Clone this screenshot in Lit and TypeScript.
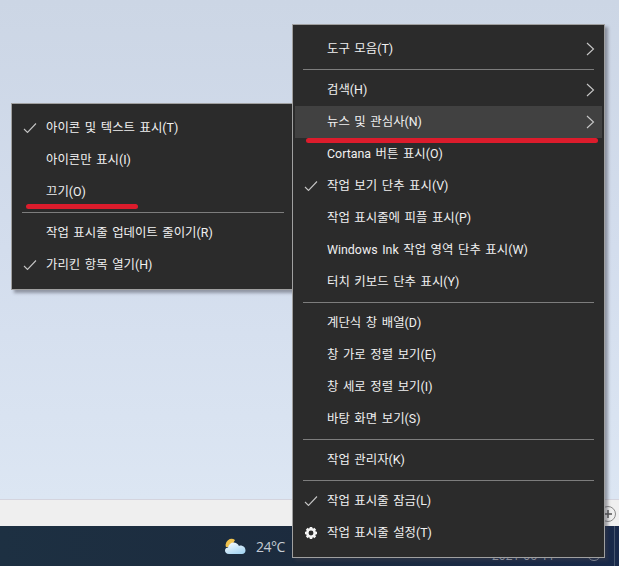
import { LitElement, html, css, svg } from "lit";
import { customElement } from "lit/decorators.js";

type Item = { t: string; check?: boolean; arrow?: boolean; gear?: boolean; hover?: boolean } | null;

const MAIN: Item[] = [
  { t: "도구 모음(T)", arrow: true },
  null,
  { t: "검색(H)", arrow: true },
  { t: "뉴스 및 관심사(N)", arrow: true, hover: true },
  { t: "Cortana 버튼 표시(O)" },
  { t: "작업 보기 단추 표시(V)", check: true },
  { t: "작업 표시줄에 피플 표시(P)" },
  { t: "Windows Ink 작업 영역 단추 표시(W)" },
  { t: "터치 키보드 단추 표시(Y)" },
  null,
  { t: "계단식 창 배열(D)" },
  { t: "창 가로 정렬 보기(E)" },
  { t: "창 세로 정렬 보기(I)" },
  { t: "바탕 화면 보기(S)" },
  null,
  { t: "작업 관리자(K)" },
  null,
  { t: "작업 표시줄 잠금(L)", check: true },
  { t: "작업 표시줄 설정(T)", gear: true },
];

const SUB: Item[] = [
  { t: "아이콘 및 텍스트 표시(T)", check: true },
  { t: "아이콘만 표시(I)" },
  { t: "끄기(O)" },
  null,
  { t: "작업 표시줄 업데이트 줄이기(R)" },
  { t: "가리킨 항목 열기(H)", check: true },
];

const check = svg`<path d="M1 6.500 L4.500 10 L13 1" fill="none" stroke="#c4c4c4" stroke-width="1.1"/>`;
const arrow = svg`<path d="M1 1 L7.500 7 L1 13" fill="none" stroke="#c8c8c8" stroke-width="1.1"/>`;
const gear = svg`
  <circle cx="6" cy="6" r="3.700" fill="none" stroke="#f4f4f4" stroke-width="2.500"/>
  <g stroke="#f4f4f4" stroke-width="2.600">
    ${[0, 45, 90, 135, 180, 225, 270, 315].map(
      (a) => svg`<line x1="6" y1="0" x2="6" y2="2.500" transform="rotate(${a} 6 6)"/>`
    )}
  </g>`;

@customElement("app-root")
export class AppRoot extends LitElement {
  static styles = css`
    :host {
      display: block;
      width: 619px;
      height: 566px;
      font-family: Roboto, "Noto Sans CJK KR", sans-serif;
    }
    .desk {
      position: relative;
      width: 619px;
      height: 566px;
      overflow: hidden;
      display: flex;
      flex-direction: column;
    }
    .wall {
      flex: 0 0 500px;
      box-sizing: border-box;
      background: linear-gradient(180deg, #ccd6e5 0%, #d3dded 50%, #dce6f3 100%);
      border-bottom: 1px solid #d4d4de;
    }
    .strip {
      flex: 0 0 26px;
      background: #efefef;
    }
    .bar {
      flex: 1;
      background: linear-gradient(90deg, #1d3042 0%, #1c2b3e 50%, #18294a 100%);
      position: relative;
    }
    .weather {
      position: absolute;
      left: 225px;
      top: 9px;
      display: flex;
      align-items: center;
      gap: 9px;
      height: 22px;
    }
    .temp {
      font: 14px "Open Sans", sans-serif;
      color: #c6ccd4;
      letter-spacing: -0.5px;
    }
    .plus {
      position: absolute;
      left: 599px;
      top: 505px;
      width: 18px;
      height: 18px;
    }
    .vline {
      position: absolute;
      left: 614px;
      top: 526px;
      bottom: 0;
      width: 1px;
      background: #46566e;
    }
    .clock {
      position: absolute;
      left: 492px;
      top: 548px;
      font: 12px/16px "Open Sans", sans-serif;
      color: #b8bec8;
      white-space: nowrap;
    }
    .ring {
      position: absolute;
      left: 587px;
      top: 547px;
      width: 12px;
      height: 12px;
      border: 1px solid #9aa2ae;
      border-radius: 50%;
    }
    .menu {
      position: absolute;
      box-sizing: border-box;
      background: #2b2b2b;
      border: 1px solid #a0a0a0;
      box-shadow: 3px 3px 3px rgba(60, 60, 70, 0.45);
      color: #f0f0f0;
      display: flex;
      flex-direction: column;
      padding: 8px 2px 8px 2px;
    }
    .main {
      left: 292px;
      top: 24px;
      width: 313px;
      height: 534px;
    }
    .sub {
      left: 11px;
      top: 103px;
      width: 284px;
      height: 187px;
    }
    .row {
      position: relative;
      flex: 0 0 32px;
      height: 32px;
      display: flex;
      align-items: center;
      padding-left: 32px;
      font-size: 12.4px;
      word-spacing: 1.500px;
      white-space: nowrap;
    }
    .row > span {
      position: relative;
      top: -1px;
    }
    .row.hover { background: #414141; }
    .ico {
      position: absolute;
      left: 9px;
      top: 50%;
      transform: translateY(-50%);
      display: block;
    }
    .ico.cog { left: 10px; }
    .arr {
      position: absolute;
      right: 7px;
      top: 50%;
      transform: translateY(-50%);
      display: block;
    }
    .sep {
      flex: 0 0 9px;
      display: flex;
      align-items: center;
      padding: 0 8px;
    }
    .sep::before {
      content: "";
      flex: 1;
      height: 1px;
      background: #7d7d7d;
    }
    .mark {
      position: absolute;
      height: 5px;
      border-radius: 3px;
      background: #dc1c2c;
    }
    .mark.a { left: 306px; top: 138px; width: 292px; }
    .mark.b { left: 26px; top: 204px; width: 112px; }
  `;

  private renderMenu(items: Item[], cls: string) {
    return html`<div class="menu ${cls}">
      ${items.map((it) =>
        it === null
          ? html`<div class="sep"></div>`
          : html`<div class="row ${it.hover ? "hover" : ""}">
              ${it.check ? html`<svg class="ico" width="14" height="11" viewBox="0 0 14 11">${check}</svg>` : ""}
              ${it.gear ? html`<svg class="ico cog" width="12" height="12" viewBox="0 0 12 12">${gear}</svg>` : ""}
              <span>${it.t}</span>
              ${it.arrow ? html`<svg class="arr" width="9" height="14" viewBox="0 0 9 14">${arrow}</svg>` : ""}
            </div>`
      )}
    </div>`;
  }

  render() {
    return html`<div class="desk">
      <div class="wall"></div>
      <div class="strip"></div>
      <div class="bar">
        <div class="weather">
          <svg width="22" height="20" viewBox="0 0 22 20">
            <defs>
              <linearGradient id="cl" x1="0" y1="0" x2="0.6" y2="1">
                <stop offset="0" stop-color="#fdfeff" />
                <stop offset="1" stop-color="#a9d6f2" />
              </linearGradient>
            </defs>
            <path d="M1 11 A6 6 0 0 1 10 4 L6 11 Z" fill="#f0c24e" />
            <path fill="url(#cl)" d="M4 18 C1 18 0 16 0 14.500 C0 12.500 1.500 11.500 3 11.500 C3.500 8.500 6 6.500 8.500 6.500 C11 6.500 13 8 14 10 C15 9.500 16 9.500 17 9.800 C19.500 10.500 20.500 12.500 20.500 14.500 C20.500 16.500 19 18 17 18 Z" />
          </svg>
          <span class="temp">24°C</span>
        </div>
      </div>
      <svg class="plus" viewBox="0 0 18 18">
        <circle cx="9" cy="9" r="7.500" fill="none" stroke="#8a8a8a" />
        <path d="M9 5 V13 M5 9 H13" stroke="#555" stroke-width="1.500" />
      </svg>
      <div class="vline"></div>
      <div class="clock">2021-06-11</div>
      <div class="ring"></div>
      ${this.renderMenu(SUB, "sub")}
      ${this.renderMenu(MAIN, "main")}
      <div class="mark a"></div>
      <div class="mark b"></div>
    </div>`;
  }
}
